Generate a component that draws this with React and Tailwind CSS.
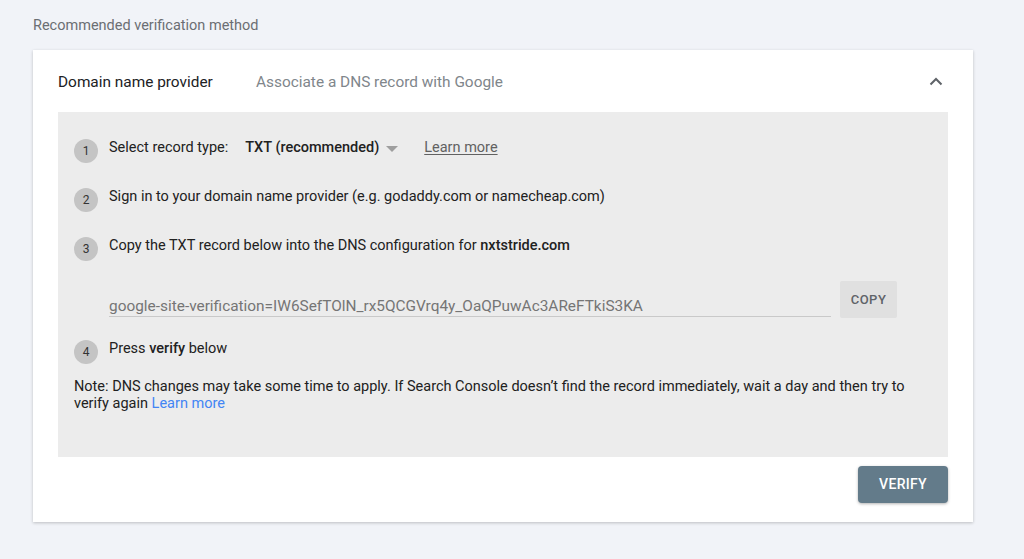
function StepBadge({ n }) {
  return (
    <div className="mt-[1px] flex h-6 w-6 shrink-0 items-center justify-center rounded-full bg-[#c4c4c4] text-[12px] text-[#333333]">
      {n}
    </div>
  );
}

function Step({ n, children, className = '' }) {
  return (
    <div className={`flex items-start gap-[11px] ${className}`}>
      <StepBadge n={n} />
      <div className="flex items-center text-[14.5px] leading-[20px] text-[#212121]">{children}</div>
    </div>
  );
}

export default function App() {
  return (
    <div className="h-[559px] w-full bg-[#f1f3f8] px-[33px] pt-[17px] font-['Roboto',sans-serif]">
      <p className="text-[14.5px] leading-[18px] text-[#6b6e73]">Recommended verification method</p>

      <div className="mt-[15px] w-[940px] bg-white shadow-[0_1px_3px_rgba(0,0,0,0.22)]">
        {/* header */}
        <div className="flex h-[62px] items-center px-[25px]">
          <p className="mt-[3px] w-[198px] text-[15.4px] text-[#202124]">Domain name provider</p>
          <p className="mt-[3px] flex-1 text-[15.4px] text-[#80868b]">Associate a DNS record with Google</p>
          <svg width="14" height="9" viewBox="0 0 14 9" className="mr-[5px]">
            <polyline points="1.5,7.5 7,2 12.5,7.5" fill="none" stroke="#5f6368" strokeWidth="2" />
          </svg>
        </div>

        {/* instructions */}
        <div className="mx-[25px] h-[345px] bg-[#ececec] pl-[16px] pr-[17px] pt-[26px]">
          <Step n={1}>
            <span>Select record type:</span>
            <span className="ml-[17px] font-medium">TXT (recommended)</span>
            <svg width="12" height="6" viewBox="0 0 12 6" className="ml-[7px] mt-[2px]">
              <polygon points="0,0 12,0 6,6" fill="#9e9e9e" />
            </svg>
            <a className="ml-[26px] text-[#616161] underline underline-offset-2">Learn more</a>
          </Step>
          <Step n={2} className="mt-[24px]">
            Sign in to your domain name provider (e.g. godaddy.com or namecheap.com)
          </Step>
          <Step n={3} className="mt-[24px]">
            <span>
              Copy the TXT record below into the DNS configuration for <b className="font-medium">nxtstride.com</b>
            </span>
          </Step>

          <div className="ml-[35px] mt-[20px] flex items-start gap-[9px]">
            <div className="h-[36px] w-[722px] border-b border-[#c9c9c9] pt-[16px] text-[15.4px] leading-[18px] text-[#757575]">
              google-site-verification=IW6SefTOlN_rx5QCGVrq4y_OaQPuwAc3AReFTkiS3KA
            </div>
            <button className="h-[37px] w-[57px] rounded-[2px] bg-[#e0e0e0] text-[13px] font-medium tracking-[0.5px] text-[#5f6368]">
              COPY
            </button>
          </div>

          <Step n={4} className="mt-[21px]">
            <span>
              Press <b className="font-medium">verify</b> below
            </span>
          </Step>

          <p className="mt-[14px] text-[14.5px] leading-[17px] text-[#212121]">
            Note: DNS changes may take some time to apply. If Search Console doesn’t find the record immediately, wait a
            day and then try to verify again <a className="text-[#4285f4]">Learn more</a>
          </p>
        </div>

        {/* footer */}
        <div className="flex justify-end px-[25px] pb-[19px] pt-[9px]">
          <button className="h-[37px] w-[90px] rounded-[4px] bg-[#637b8a] text-[14px] font-medium tracking-[0.3px] text-white shadow-[0_1px_3px_rgba(0,0,0,0.3)]">
            VERIFY
          </button>
        </div>
      </div>
    </div>
  );
}
